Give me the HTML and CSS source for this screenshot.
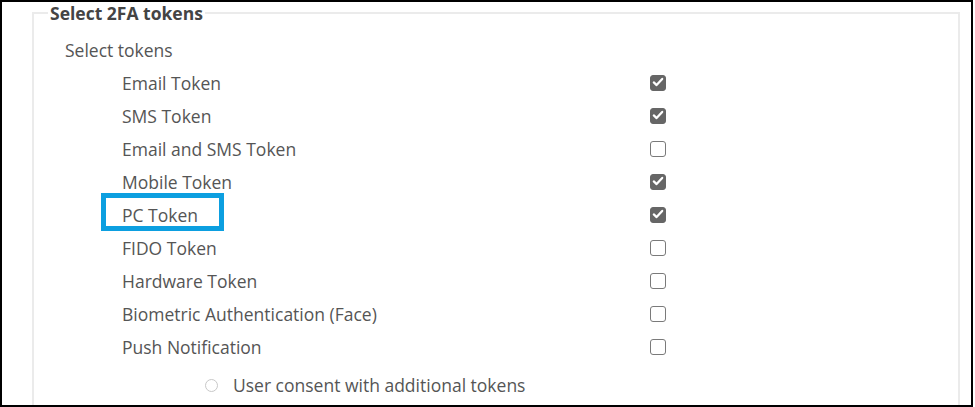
FILE: index.html
```html
<!DOCTYPE html>
<html>
<head>
<meta charset="utf-8">
<link rel="stylesheet" href="styles.css">
</head>
<body>
<div class="frame">
  <fieldset class="group">
    <legend class="group-title">Select 2FA tokens</legend>
    <div class="section-label">Select tokens</div>
    <div class="token-list">
      <div class="row"><span class="label">Email Token</span><span class="cb on"><svg viewBox="0 0 16 16"><path d="M3.8 8.4 L6.6 11.1 L12.2 4.9"/></svg></span></div>
      <div class="row"><span class="label">SMS Token</span><span class="cb on"><svg viewBox="0 0 16 16"><path d="M3.8 8.4 L6.6 11.1 L12.2 4.9"/></svg></span></div>
      <div class="row"><span class="label">Email and SMS Token</span><span class="cb"></span></div>
      <div class="row"><span class="label">Mobile Token</span><span class="cb on"><svg viewBox="0 0 16 16"><path d="M3.8 8.4 L6.6 11.1 L12.2 4.9"/></svg></span></div>
      <div class="row"><span class="label">PC Token</span><span class="cb on"><svg viewBox="0 0 16 16"><path d="M3.8 8.4 L6.6 11.1 L12.2 4.9"/></svg></span></div>
      <div class="row"><span class="label">FIDO Token</span><span class="cb"></span></div>
      <div class="row"><span class="label">Hardware Token</span><span class="cb"></span></div>
      <div class="row"><span class="label">Biometric Authentication (Face)</span><span class="cb"></span></div>
      <div class="row"><span class="label">Push Notification</span><span class="cb"></span></div>
    </div>
    <div class="radio-row"><span class="radio"></span><span class="label">User consent with additional tokens</span></div>
  </fieldset>
  <div class="highlight"></div>
</div>
</body>
</html>
```

FILE: styles.css
```css
html, body {
  margin: 0;
  padding: 0;
  background: #fff;
}
.frame {
  position: relative;
  width: 973px;
  height: 407px;
  box-sizing: border-box;
  border: 2px solid #000;
  overflow: hidden;
  font-family: "Open Sans", "Noto Sans", sans-serif;
  color: #555;
}
.group {
  margin: 0 11px 0 30px;
  padding: 0 0 40px 31px;
  border: 2px solid #ebebeb;
  min-height: 420px;
  box-sizing: border-box;
}
.group-title {
  font-weight: bold;
  font-size: 17.5px;
  color: #444;
  padding: 0 2px;
  margin-left: -17px;
  line-height: 22px;
}
.section-label {
  font-size: 17.5px;
  line-height: 22px;
  margin-top: 15px;
}
.token-list {
  display: flex;
  flex-direction: column;
  margin-top: 5px;
}
.row {
  display: grid;
  grid-template-columns: 528px 16px;
  align-items: center;
  height: 33px;
  padding-left: 57px;
}
.label {
  font-size: 17.5px;
  line-height: 22px;
}
.cb {
  width: 16px;
  height: 16px;
  box-sizing: border-box;
  border: 1.5px solid #7a7a7a;
  border-radius: 3px;
  background: #fff;
  display: block;
}
.cb.on {
  background: #666;
  border-color: #666;
}
.cb svg {
  display: block;
  width: 16px;
  height: 16px;
  margin: -1.5px;
}
.cb svg path {
  fill: none;
  stroke: #fff;
  stroke-width: 2.2;
  stroke-linecap: round;
  stroke-linejoin: round;
}
.radio-row {
  display: flex;
  align-items: center;
  gap: 15px;
  padding-left: 140px;
  height: 44px;
}
.radio {
  width: 13px;
  height: 13px;
  box-sizing: border-box;
  border: 1px solid #c8c8c8;
  border-radius: 50%;
  background: #fff;
}
.highlight {
  position: absolute;
  left: 99px;
  top: 191px;
  width: 123px;
  height: 38px;
  box-sizing: border-box;
  border: 5px solid #0c9fe0;
}
```
